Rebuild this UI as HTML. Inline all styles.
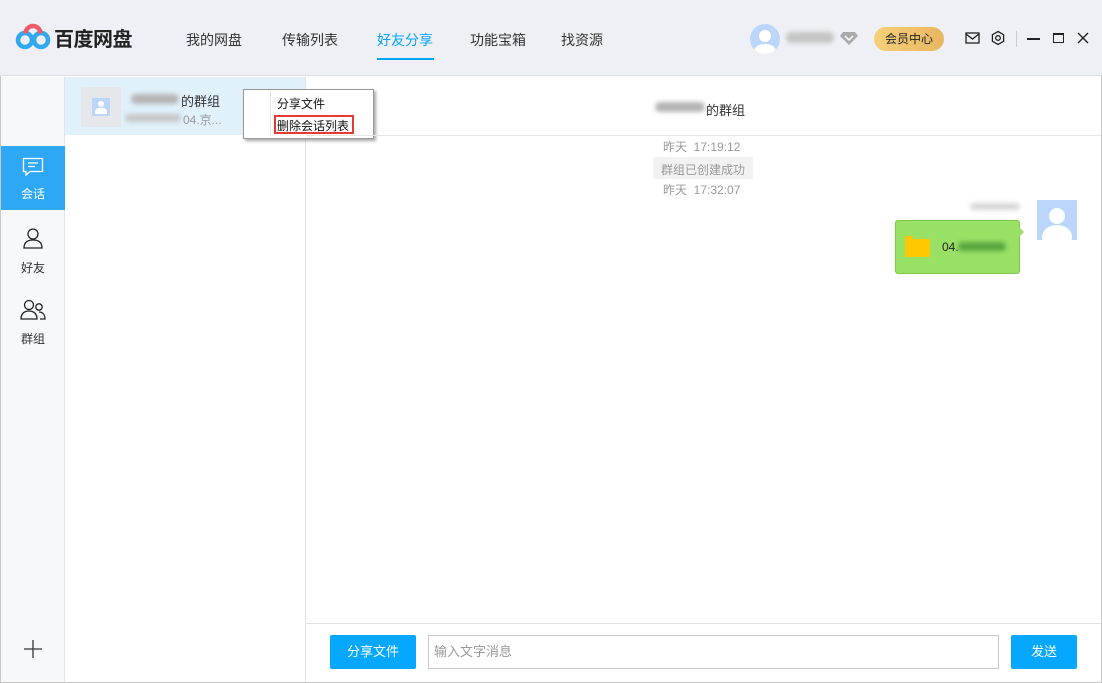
<!DOCTYPE html>
<html><head><meta charset="utf-8"><style>
*{margin:0;padding:0;box-sizing:border-box}
body{width:1102px;height:683px;overflow:hidden;font-family:"Liberation Sans","Noto Sans CJK SC",sans-serif;font-size:13px;color:#333;background:#fff;position:relative}
.a{position:absolute}
.blur{filter:blur(2.5px);color:#999}
</style></head><body>
<div class="a" style="left:0;top:0;width:1102px;height:683px;border:1px solid #c8c8c8"></div>
<div class="a" style="left:0;top:0;width:1102px;height:76px;background:#eef0f5;border-bottom:1px solid #dcdde2"></div>
<svg class="a" style="left:15px;top:22px" width="36" height="28" viewBox="0 0 36 28">
<circle cx="10" cy="18" r="7" fill="none" stroke="#2fa8ef" stroke-width="4.5"/>
<circle cx="26" cy="18" r="7" fill="none" stroke="#2fa8ef" stroke-width="4.5"/>
<path d="M10.5 11.5A7.5 7.5 0 1 1 25.5 11.5" fill="none" stroke="#ef5a6b" stroke-width="4.5"/>
</svg>
<div class="a" style="left:54px;top:23px;font-size:20px;font-weight:bold;color:#222;letter-spacing:-0.5px">百度网盘</div>
<div class="a" style="left:186px;top:30px;font-size:14px;color:#333">我的网盘</div>
<div class="a" style="left:282px;top:30px;font-size:14px;color:#333">传输列表</div>
<div class="a" style="left:377px;top:30px;font-size:14px;color:#06a7ff">好友分享</div>
<div class="a" style="left:377px;top:58px;width:57px;height:2px;background:#06a7ff"></div>
<div class="a" style="left:470px;top:30px;font-size:14px;color:#333">功能宝箱</div>
<div class="a" style="left:561px;top:30px;font-size:14px;color:#333">找资源</div>
<div class="a" style="left:750px;top:24px;width:30px;height:30px;border-radius:50%;background:#bcd6fb;overflow:hidden"><div class="a" style="left:9px;top:6px;width:12px;height:12px;border-radius:50%;background:#fff"></div><div class="a" style="left:4px;top:20px;width:22px;height:14px;border-radius:50%;background:#fff"></div></div>
<div class="a blur" style="left:786px;top:32px;width:48px;height:11px;background:#c4c4c4;border-radius:6px"></div>
<svg class="a" style="left:840px;top:31px" width="18" height="14"><path d="M3 1h12l3 4-9 9-9-9z" fill="#aaa"/><path d="M5 5l4 4 4-4" stroke="#fff" stroke-width="1.5" fill="none"/></svg>
<div class="a" style="left:874px;top:27px;width:70px;height:24px;border-radius:12px;background:linear-gradient(90deg,#f6d07a,#e9b660);font-size:12px;text-align:center;line-height:24px;color:#222">会员中心</div>
<svg class="a" style="left:965px;top:31px" width="16" height="14"><rect x="1" y="2" width="13" height="10" fill="none" stroke="#222" stroke-width="1.3"/><path d="M1 3l6.5 5 6.5-5" fill="none" stroke="#222" stroke-width="1.3"/></svg>
<svg class="a" style="left:990px;top:30px" width="16" height="16"><path d="M8 1.5l5.6 3.2v6.6L8 14.5 2.4 11.3V4.7z" fill="none" stroke="#222" stroke-width="1.3"/><circle cx="8" cy="8" r="2.3" fill="none" stroke="#222" stroke-width="1.3"/></svg>
<div class="a" style="left:1016px;top:31px;width:1px;height:16px;background:#ccc"></div>
<div class="a" style="left:1027px;top:38px;width:13px;height:1.5px;background:#222"></div>
<div class="a" style="left:1053px;top:33px;width:11px;height:10px;border:1.4px solid #222;border-top-width:2.5px"></div>
<svg class="a" style="left:1077px;top:32px" width="12" height="12"><path d="M1 1l10 10M11 1L1 11" stroke="#222" stroke-width="1.4"/></svg>
<!-- sidebar -->
<div class="a" style="left:1px;top:77px;width:64px;height:605px;background:#f7f8fa;border-right:1px solid #e2e3e6"></div>
<div class="a" style="left:1px;top:146px;width:64px;height:64px;background:#2ea8f5"></div>
<svg class="a" style="left:22px;top:157px" width="22" height="20"><path d="M1.5 1.5h19v13H8l-4 3.5v-3.5H1.5z" fill="none" stroke="#fff" stroke-width="1.3"/><path d="M6 6h10M6 9.5h7" stroke="#fff" stroke-width="1.3"/></svg>
<div class="a" style="left:21px;top:185px;font-size:12px;color:#fff">会话</div>
<svg class="a" style="left:22px;top:227px" width="22" height="22"><circle cx="11" cy="7" r="5" fill="none" stroke="#222" stroke-width="1.3"/><path d="M2 21c0-6 4-8 9-8s9 2 9 8z" fill="none" stroke="#222" stroke-width="1.3"/></svg>
<div class="a" style="left:21px;top:259px;font-size:12px;color:#333">好友</div>
<svg class="a" style="left:20px;top:299px" width="26" height="22"><circle cx="9" cy="6" r="4.5" fill="none" stroke="#222" stroke-width="1.3"/><path d="M1 20c0-5 3-8 8-8s8 3 8 8z" fill="none" stroke="#222" stroke-width="1.3"/><circle cx="19" cy="8" r="3.2" fill="none" stroke="#222" stroke-width="1.3"/><path d="M19 13c4 0 6 3 6 7h-5" fill="none" stroke="#222" stroke-width="1.3"/></svg>
<div class="a" style="left:21px;top:330px;font-size:12px;color:#333">群组</div>
<svg class="a" style="left:24px;top:640px" width="18" height="18"><path d="M9 0v18M0 9h18" stroke="#333" stroke-width="1.3"/></svg>
<!-- list -->
<div class="a" style="left:65px;top:77px;width:241px;height:605px;border-right:1px solid #e2e3e6;background:#fff"></div>
<div class="a" style="left:65px;top:77px;width:240px;height:58px;background:#e0f1fb"></div>
<div class="a" style="left:81px;top:87px;width:40px;height:40px;background:#e6e7ea"><div class="a" style="left:11px;top:11px;width:18px;height:18px;background:#bcd6fb"><div class="a" style="left:6px;top:3px;width:6px;height:6px;border-radius:50%;background:#fff"></div><div class="a" style="left:3px;top:10px;width:12px;height:6px;border-radius:4px 4px 0 0;background:#fff"></div></div></div>
<div class="a blur" style="left:131px;top:94px;width:48px;height:10px;background:#b4b4b4;border-radius:6px"></div>
<div class="a" style="left:181px;top:91px;font-size:13px;color:#333">的群组</div>
<div class="a blur" style="left:125px;top:114px;width:56px;height:8px;background:#c6c6c6;border-radius:6px"></div>
<div class="a" style="left:183px;top:111px;font-size:12px;color:#999">04.京...</div>
<!-- context menu -->
<div class="a" style="left:243px;top:89px;width:131px;height:50px;background:#fff;border:1px solid #999;box-shadow:2px 2px 3px rgba(0,0,0,.35)"></div>
<div class="a" style="left:270px;top:91px;width:1px;height:44px;background:#e6e6e6"></div>
<div class="a" style="left:277px;top:95px;font-size:12px;color:#111">分享文件</div>
<div class="a" style="left:274px;top:115px;width:80px;height:19px;border:2px solid #e53935"></div>
<div class="a" style="left:277px;top:117px;font-size:12px;color:#111">删除会话列表</div>
<!-- chat -->
<div class="a blur" style="left:655px;top:102px;width:50px;height:10px;background:#b4b4b4;border-radius:6px"></div>
<div class="a" style="left:706px;top:100px;font-size:13px;color:#333">的群组</div>
<div class="a" style="left:306px;top:135px;width:795px;height:1px;background:#e5e5e5"></div>
<div class="a" style="left:663px;top:138px;font-size:12px;color:#999">昨天&nbsp; 17:19:12</div>
<div class="a" style="left:653px;top:157px;width:100px;height:22px;background:#f2f2f2"></div>
<div class="a" style="left:661px;top:161px;font-size:12px;color:#999">群组已创建成功</div>
<div class="a" style="left:663px;top:181px;font-size:12px;color:#999">昨天&nbsp; 17:32:07</div>
<div class="a blur" style="left:970px;top:203px;width:50px;height:7px;background:#d6d6d6;border-radius:5px"></div>
<div class="a" style="left:1037px;top:200px;width:40px;height:40px;background:#bcd6fb;overflow:hidden"><div class="a" style="left:12px;top:8px;width:16px;height:16px;border-radius:50%;background:#fff"></div><div class="a" style="left:5px;top:25px;width:30px;height:24px;border-radius:50%;background:#fff"></div></div>
<div class="a" style="left:895px;top:220px;width:125px;height:54px;background:#98e165;border:1px solid #7fc84e;border-radius:3px"></div>
<svg class="a" style="left:1019px;top:227px" width="6" height="12"><path d="M0 0l5 5-5 5z" fill="#98e165"/></svg>
<div class="a" style="left:905px;top:236px;width:8px;height:4px;background:#ffc400;border-radius:2px 2px 0 0"></div>
<div class="a" style="left:905px;top:239px;width:25px;height:18px;background:#ffc800;border-radius:1px"></div>
<div class="a" style="left:942px;top:240px;font-size:12px;color:#222">04.</div>
<div class="a blur" style="left:958px;top:242px;width:48px;height:9px;background:#5aa540;border-radius:5px"></div>
<!-- input -->
<div class="a" style="left:306px;top:623px;width:795px;height:1px;background:#e2e2e2"></div>
<div class="a" style="left:330px;top:635px;width:86px;height:34px;background:#06a7ff;border-radius:2px;color:#fff;font-size:13px;text-align:center;line-height:34px">分享文件</div>
<div class="a" style="left:428px;top:635px;width:571px;height:34px;border:1px solid #c9c9c9;color:#999;font-size:13px;line-height:32px;padding-left:5px">输入文字消息</div>
<div class="a" style="left:1011px;top:635px;width:66px;height:34px;background:#06a7ff;border-radius:2px;color:#fff;font-size:13px;text-align:center;line-height:34px">发送</div>
</body></html>
